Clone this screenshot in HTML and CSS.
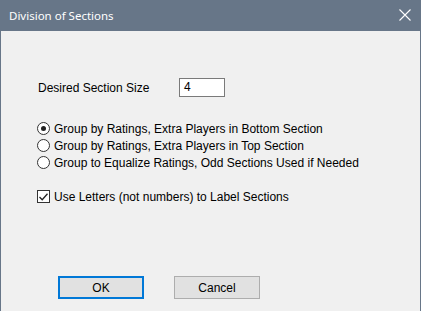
FILE: index.html
```html
<!DOCTYPE html>
<html lang="en">
<head>
    <meta charset="UTF-8">
    <title>Division of Sections</title>
    <link rel="stylesheet" href="styles.css">
</head>
<body>
    <div class="window">
        <div class="titlebar">
            <span class="title">Division of Sections</span>
            <svg class="close" width="12" height="12" viewBox="0 0 12 12">
                <path d="M0.5 0.5 L11.5 11.5 M11.5 0.5 L0.5 11.5" stroke="#fff" stroke-width="1.1"/>
            </svg>
        </div>
        <div class="content">
            <div class="size-row">
                <span class="size-label">Desired Section Size</span>
                <div class="size-input">4</div>
            </div>

            <div class="options">
                <div class="option"><span class="radio checked"></span>Group by Ratings, Extra Players in Bottom Section</div>
                <div class="option"><span class="radio"></span>Group by Ratings, Extra Players in Top Section</div>
                <div class="option"><span class="radio"></span>Group to Equalize Ratings, Odd Sections Used if Needed</div>
            </div>

            <div class="option check-row">
                <span class="checkbox">
                    <svg width="9" height="8" viewBox="0 0 9 8"><path d="M0.5 4 L3.2 6.8 L8.5 0.8" fill="none" stroke="#222" stroke-width="1.3"/></svg>
                </span>Use Letters (not numbers) to Label Sections
            </div>

            <div class="buttons">
                <button class="btn default">OK</button>
                <button class="btn">Cancel</button>
            </div>
        </div>
    </div>
</body>
</html>
```

FILE: styles.css
```css
body {
    margin: 0;
    padding: 0;
    background-color: #f0f0f0;
    font-family: "Liberation Sans", Arial, sans-serif;
    font-size: 12px;
    color: #000;
}

.window {
    height: 311px;
    border-left: 1px solid #677688;
    border-right: 1px solid #677688;
    box-sizing: border-box;
    background-color: #f0f0f0;
}

.titlebar {
    height: 31px;
    background-color: #677688;
    display: flex;
    align-items: center;
    justify-content: space-between;
    padding: 0 9px 0 8px;
}

.title {
    color: #fff;
    font-family: "Noto Sans", "Open Sans", sans-serif;
    font-size: 11.5px;
    margin-top: -1px;
}

.close {
    margin-top: -1px;
}

.content {
    padding-left: 36px;
}

.size-row {
    display: flex;
    align-items: center;
    margin-top: 46px;
    height: 21px;
}

.size-label {
    width: 141px;
    padding-left: 1px;
}

.size-input {
    width: 40px;
    height: 17px;
    border: 1px solid #7a7a7a;
    background-color: #fff;
    padding-left: 4px;
    line-height: 17px;
}

.options {
    margin-top: 22px;
}

.option {
    display: flex;
    align-items: center;
    height: 17px;
}

.radio {
    width: 11px;
    height: 11px;
    border: 1px solid #333;
    border-radius: 50%;
    background-color: #fff;
    margin-right: 4px;
    position: relative;
}

.radio.checked::after {
    content: "";
    position: absolute;
    left: 3px;
    top: 3px;
    width: 5px;
    height: 5px;
    border-radius: 50%;
    background-color: #222;
}

.check-row {
    margin-top: 17px;
}

.checkbox {
    width: 11px;
    height: 11px;
    border: 1px solid #333;
    background-color: #fff;
    margin-right: 4px;
    display: flex;
    align-items: center;
    justify-content: center;
}

.buttons {
    display: flex;
    gap: 30px;
    margin-top: 71px;
    padding-left: 21px;
}

.btn {
    width: 86px;
    height: 23px;
    background-color: #e1e1e1;
    border: 1px solid #adadad;
    font-family: "Liberation Sans", Arial, sans-serif;
    font-size: 12px;
    color: #000;
    padding: 0;
}

.btn.default {
    border: 2px solid #0078d7;
}
```
